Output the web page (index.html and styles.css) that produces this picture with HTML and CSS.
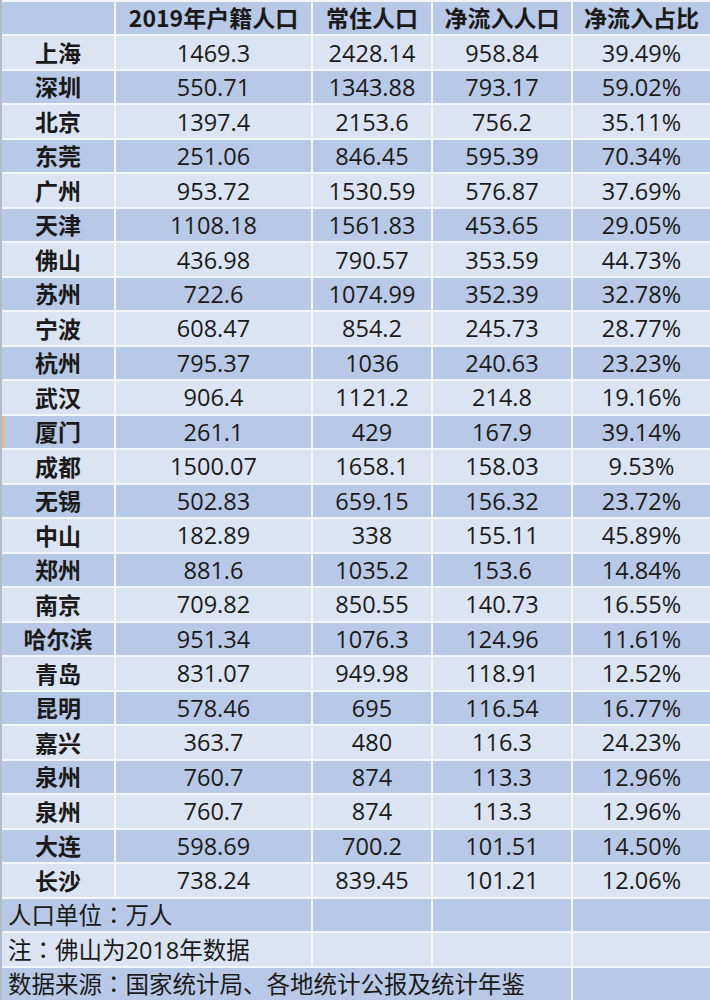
FILE: index.html
```html
<!DOCTYPE html>
<html lang="zh">
<head>
<meta charset="utf-8">
<title>净流入人口</title>
<link rel="stylesheet" href="styles.css">
</head>
<body>
<div class="sheet">
  <div class="c hd"></div><div class="c hd">2019年户籍人口</div><div class="c hd">常住人口</div><div class="c hd">净流入人口</div><div class="c hd">净流入占比</div>
  <div class="c nm lt">上海</div><div class="c lt">1469.3</div><div class="c lt">2428.14</div><div class="c lt">958.84</div><div class="c lt">39.49%</div>
  <div class="c nm dk">深圳</div><div class="c dk">550.71</div><div class="c dk">1343.88</div><div class="c dk">793.17</div><div class="c dk">59.02%</div>
  <div class="c nm lt">北京</div><div class="c lt">1397.4</div><div class="c lt">2153.6</div><div class="c lt">756.2</div><div class="c lt">35.11%</div>
  <div class="c nm dk">东莞</div><div class="c dk">251.06</div><div class="c dk">846.45</div><div class="c dk">595.39</div><div class="c dk">70.34%</div>
  <div class="c nm lt">广州</div><div class="c lt">953.72</div><div class="c lt">1530.59</div><div class="c lt">576.87</div><div class="c lt">37.69%</div>
  <div class="c nm dk">天津</div><div class="c dk">1108.18</div><div class="c dk">1561.83</div><div class="c dk">453.65</div><div class="c dk">29.05%</div>
  <div class="c nm lt">佛山</div><div class="c lt">436.98</div><div class="c lt">790.57</div><div class="c lt">353.59</div><div class="c lt">44.73%</div>
  <div class="c nm dk">苏州</div><div class="c dk">722.6</div><div class="c dk">1074.99</div><div class="c dk">352.39</div><div class="c dk">32.78%</div>
  <div class="c nm lt">宁波</div><div class="c lt">608.47</div><div class="c lt">854.2</div><div class="c lt">245.73</div><div class="c lt">28.77%</div>
  <div class="c nm dk">杭州</div><div class="c dk">795.37</div><div class="c dk">1036</div><div class="c dk">240.63</div><div class="c dk">23.23%</div>
  <div class="c nm lt">武汉</div><div class="c lt">906.4</div><div class="c lt">1121.2</div><div class="c lt">214.8</div><div class="c lt">19.16%</div>
  <div class="c nm dk mark">厦门</div><div class="c dk">261.1</div><div class="c dk">429</div><div class="c dk">167.9</div><div class="c dk">39.14%</div>
  <div class="c nm lt">成都</div><div class="c lt">1500.07</div><div class="c lt">1658.1</div><div class="c lt">158.03</div><div class="c lt">9.53%</div>
  <div class="c nm dk">无锡</div><div class="c dk">502.83</div><div class="c dk">659.15</div><div class="c dk">156.32</div><div class="c dk">23.72%</div>
  <div class="c nm lt">中山</div><div class="c lt">182.89</div><div class="c lt">338</div><div class="c lt">155.11</div><div class="c lt">45.89%</div>
  <div class="c nm dk">郑州</div><div class="c dk">881.6</div><div class="c dk">1035.2</div><div class="c dk">153.6</div><div class="c dk">14.84%</div>
  <div class="c nm lt">南京</div><div class="c lt">709.82</div><div class="c lt">850.55</div><div class="c lt">140.73</div><div class="c lt">16.55%</div>
  <div class="c nm dk">哈尔滨</div><div class="c dk">951.34</div><div class="c dk">1076.3</div><div class="c dk">124.96</div><div class="c dk">11.61%</div>
  <div class="c nm lt">青岛</div><div class="c lt">831.07</div><div class="c lt">949.98</div><div class="c lt">118.91</div><div class="c lt">12.52%</div>
  <div class="c nm dk">昆明</div><div class="c dk">578.46</div><div class="c dk">695</div><div class="c dk">116.54</div><div class="c dk">16.77%</div>
  <div class="c nm lt">嘉兴</div><div class="c lt">363.7</div><div class="c lt">480</div><div class="c lt">116.3</div><div class="c lt">24.23%</div>
  <div class="c nm dk">泉州</div><div class="c dk">760.7</div><div class="c dk">874</div><div class="c dk">113.3</div><div class="c dk">12.96%</div>
  <div class="c nm lt">泉州</div><div class="c lt">760.7</div><div class="c lt">874</div><div class="c lt">113.3</div><div class="c lt">12.96%</div>
  <div class="c nm dk">大连</div><div class="c dk">598.69</div><div class="c dk">700.2</div><div class="c dk">101.51</div><div class="c dk">14.50%</div>
  <div class="c nm lt">长沙</div><div class="c lt">738.24</div><div class="c lt">839.45</div><div class="c lt">101.21</div><div class="c lt">12.06%</div>
  <div class="c note dk span2"><span class="txt">人口单位<span class="colon">：</span>万人</span></div><div class="c dk"></div><div class="c dk"></div><div class="c dk"></div>
  <div class="c note lt span2"><span class="txt">注<span class="colon">：</span>佛山为2018年数据</span></div><div class="c lt"></div><div class="c lt"></div><div class="c lt"></div>
  <div class="c note dk span4"><span class="txt">数据来源<span class="colon">：</span>国家统计局、各地统计公报及统计年鉴</span></div><div class="c dk"></div>
</div>
</body>
</html>
```
FILE: styles.css
```css
html, body {
  margin: 0;
  padding: 0;
  background: #ffffff;
}
.sheet {
  width: 708px;
  height: 998px;
  padding-top: 2px;
  border-left: 2px solid #b3bccb;
  background: #f4f6fa;
  display: grid;
  grid-template-columns: 112px 195px 118px 138px 137px;
  grid-template-rows: repeat(29, 1fr);
  column-gap: 2px;
  row-gap: 2px;
  font-family: "Open Sans", "Noto Sans CJK SC", sans-serif;
  color: #1a1a1a;
}
.c {
  display: flex;
  align-items: center;
  justify-content: center;
  font-size: 23.5px;
  line-height: 1.2;
  white-space: nowrap;
  position: relative;
  min-width: 0;
  min-height: 0;
}
.dk { background: #b8c9e7; }
.lt { background: #dce4f2; }
.hd {
  background: #b8c9e7;
  font-family: "Noto Sans CJK SC", sans-serif;
  font-weight: 700;
  font-size: 23px;
}
.nm {
  font-family: "Noto Sans CJK SC", sans-serif;
  font-weight: 700;
  font-size: 23px;
}
.note {
  justify-content: flex-start;
  padding-left: 6px;
  font-family: "Open Sans", "Noto Sans CJK SC", sans-serif;
  font-size: 23.5px;
}
.txt {
  display: block;
}
.colon {
  display: inline-block;
  width: 1em;
  font-family: "Noto Sans CJK TC", sans-serif;
}
.span2 { grid-column: span 2; }
.span4 { grid-column: span 4; }
.mark::before {
  content: "";
  position: absolute;
  left: 0;
  top: 0;
  bottom: 0;
  width: 2px;
  background: #f2b56a;
}
```
